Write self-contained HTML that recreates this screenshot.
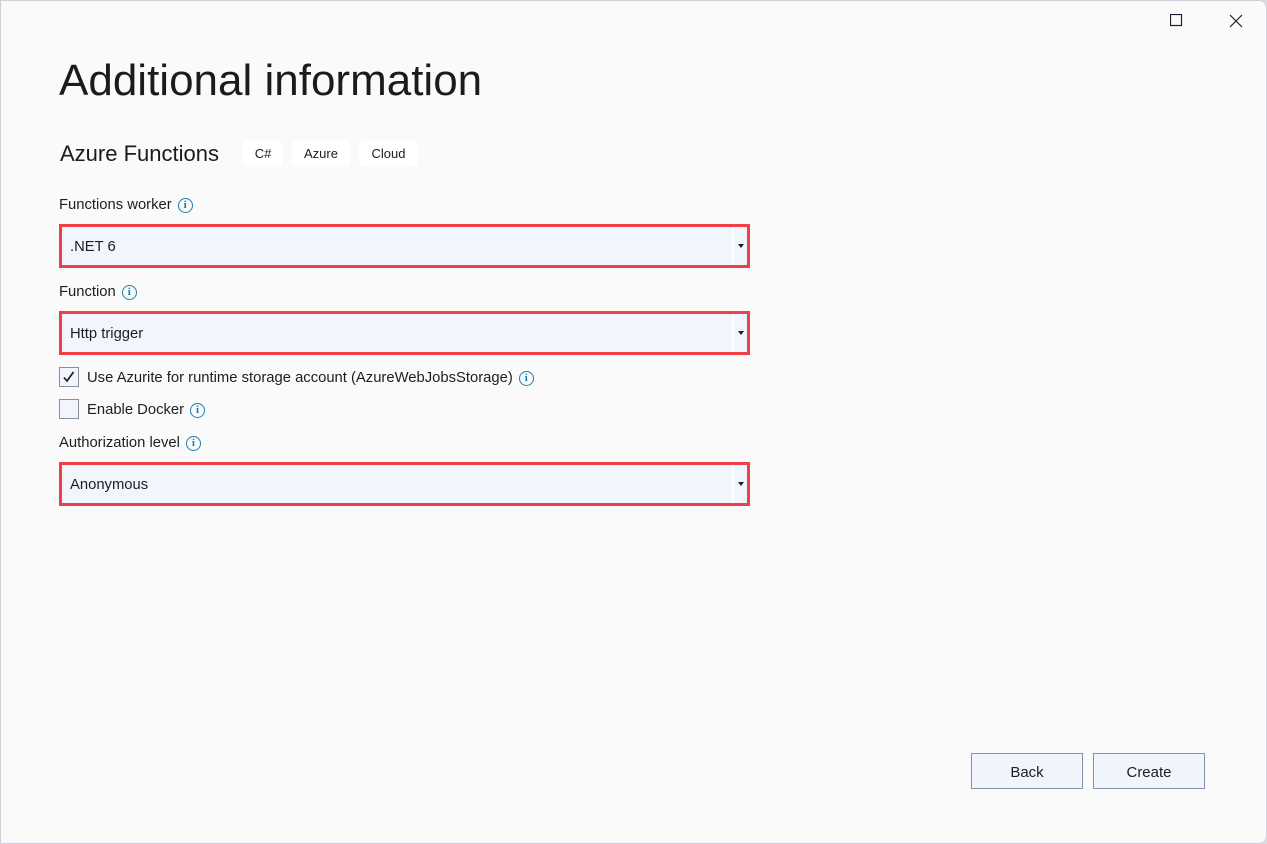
<!DOCTYPE html>
<html><head><style>
*{box-sizing:border-box}
body{margin:0;width:1267px;height:844px;background:#dcdce0;font-family:"Liberation Sans",sans-serif;overflow:hidden;position:relative;color:#1e1e1e}
.win{position:absolute;left:0;top:0;width:1267px;height:844px;background:#fafafa;border:1px solid #d0d0d8;border-radius:0 8px 8px 0}
.a{position:absolute}
h1{position:absolute;left:58px;top:55px;margin:0;font-weight:normal;font-size:44px;color:#1b1b1b;white-space:nowrap}
.sub{left:59px;top:140px;font-size:22px;color:#1b1b1b}
.tag{top:139px;height:27px;line-height:27px;background:#fff;border-radius:5px;font-size:13px;text-align:center}
.lbl{left:58px;font-size:14.8px;white-space:nowrap;display:flex;align-items:center;height:20px}
.info{display:inline-block;width:15px;height:15px;border:1.6px solid #1a7fb0;border-radius:50%;color:#1a7fb0;font-size:11px;font-weight:bold;line-height:12px;text-align:center;margin-left:6px;font-family:"Liberation Serif",serif}
.dd{position:absolute;left:58px;width:691px;height:44px;border:3px solid #f04046;background:#f1f5fd;font-size:14.8px;line-height:41px}
.dd span{position:absolute;left:8px}
.dd .sep{position:absolute;left:670px;top:0;width:2px;height:38px;background:#fff}
.dd .ar{position:absolute;left:676px;top:17px;width:0;height:0;border-left:3.5px solid transparent;border-right:3.5px solid transparent;border-top:4px solid #1e1e1e}
.cb{position:absolute;left:58px;width:20px;height:20px;border:1px solid #8a8f9c;background:#f1f5fd}
.btn{position:absolute;top:752px;width:112px;height:36px;border:1px solid #8793a6;background:#f0f4fd;font-size:15px;text-align:center;line-height:37px}
</style></head><body>
<div class="win">
<svg class="a" style="left:1169px;top:13px" width="13" height="13"><rect x="0.5" y="0.5" width="11" height="11" fill="none" stroke="#1e1e2e" stroke-width="1.2"/></svg>
<svg class="a" style="left:1228px;top:13px" width="14" height="14"><path d="M1 1L13 13M13 1L1 13" stroke="#1e1e2e" stroke-width="1.2"/></svg>
<h1>Additional information</h1>
<div class="a sub">Azure Functions</div>
<div class="a tag" style="left:242px;width:40px">C#</div>
<div class="a tag" style="left:291px;width:58px">Azure</div>
<div class="a tag" style="left:358px;width:59px">Cloud</div>
<div class="a lbl" style="top:194px">Functions worker<span class="info">i</span></div>
<div class="dd" style="top:223px"><span>.NET 6</span><div class="sep"></div><div class="ar"></div></div>
<div class="a lbl" style="top:281px">Function<span class="info">i</span></div>
<div class="dd" style="top:310px"><span>Http trigger</span><div class="sep"></div><div class="ar"></div></div>
<div class="cb" style="top:366px"><svg width="18" height="18" style="position:absolute;left:0;top:0"><path d="M4 9.5L7 13L13.5 4" fill="none" stroke="#1e1e1e" stroke-width="1.7"/></svg></div>
<div class="a lbl" style="left:86px;top:367px">Use Azurite for runtime storage account (AzureWebJobsStorage)<span class="info">i</span></div>
<div class="cb" style="top:398px"></div>
<div class="a lbl" style="left:86px;top:399px">Enable Docker<span class="info">i</span></div>
<div class="a lbl" style="top:432px">Authorization level<span class="info">i</span></div>
<div class="dd" style="top:461px"><span>Anonymous</span><div class="sep"></div><div class="ar"></div></div>
<div class="btn" style="left:970px">Back</div>
<div class="btn" style="left:1092px">Create</div>
</div>
</body></html>
